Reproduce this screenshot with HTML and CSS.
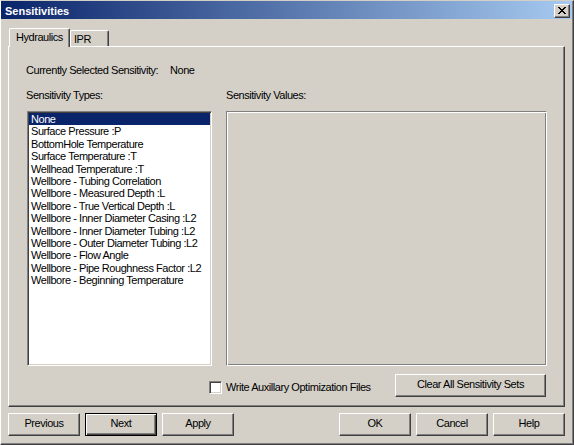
FILE: index.html
```html
<!DOCTYPE html>
<html>
<head>
<meta charset="utf-8">
<title>Sensitivities</title>
<link rel="stylesheet" href="styles.css">
</head>
<body>
<div class="window">
  <div class="titlebar">
    <span class="title">Sensitivities</span>
    <div class="close-btn">
      <svg width="8" height="7" viewBox="0 0 8 7" shape-rendering="crispEdges"><path d="M0 0h2v1H0z M6 0h2v1H6z M1 1h2v1H1z M5 1h2v1H5z M2 2h4v1H2z M3 3h2v1H3z M2 4h4v1H2z M1 5h2v1H1z M5 5h2v1H5z M0 6h2v1H0z M6 6h2v1H6z" fill="#000"/></svg>
    </div>
  </div>
  <div class="client">
    <div class="tabs">
      <div class="tab tab-active">Hydraulics</div>
      <div class="tab tab-ipr">IPR</div>
    </div>
    <div class="panel">
      <div class="current"><span class="current-label">Currently Selected Sensitivity:</span><span class="current-value">None</span></div>
      <div class="columns">
        <div class="col col-types">
          <div class="label">Sensitivity Types:</div>
          <ul class="listbox">
            <li class="selected">None</li>
            <li>Surface Pressure :P</li>
            <li>BottomHole Temperature</li>
            <li>Surface Temperature :T</li>
            <li>Wellhead Temperature :T</li>
            <li>Wellbore - Tubing Correlation</li>
            <li>Wellbore - Measured Depth :L</li>
            <li>Wellbore - True Vertical Depth :L</li>
            <li>Wellbore - Inner Diameter Casing :L2</li>
            <li>Wellbore - Inner Diameter Tubing :L2</li>
            <li>Wellbore - Outer Diameter Tubing :L2</li>
            <li>Wellbore - Flow Angle</li>
            <li>Wellbore - Pipe Roughness Factor :L2</li>
            <li>Wellbore - Beginning Temperature</li>
          </ul>
        </div>
        <div class="col col-values">
          <div class="label">Sensitivity Values:</div>
          <div class="values-box"></div>
        </div>
      </div>
      <div class="panel-footer">
        <label class="check"><span class="checkbox"></span><span>Write Auxillary Optimization Files</span></label>
        <div class="btn btn-clear">Clear All Sensitivity Sets</div>
      </div>
    </div>
    <div class="buttons">
      <div class="btn-group">
        <div class="btn">Previous</div>
        <div class="btn btn-default">Next</div>
        <div class="btn">Apply</div>
      </div>
      <div class="btn-group">
        <div class="btn">OK</div>
        <div class="btn">Cancel</div>
        <div class="btn">Help</div>
      </div>
    </div>
  </div>
</div>
</body>
</html>
```

FILE: styles.css
```css
* { box-sizing: border-box; }
html, body { margin: 0; padding: 0; }
body {
  width: 574px;
  height: 445px;
  overflow: hidden;
  background: #d4d0c8;
  font-family: "Liberation Sans", Arial, sans-serif;
  font-size: 11px;
  letter-spacing: -0.45px;
  color: #000;
}
.window {
  width: 574px;
  height: 445px;
  display: flex;
  flex-direction: column;
  border: 1px solid;
  border-color: #d4d0c8 #404040 #404040 #fff;
  padding: 0 1px 1px 0;
  box-shadow: inset -1px -1px 0 #808080;
}
.titlebar {
  height: 18px;
  display: flex;
  align-items: flex-start;
  background: linear-gradient(to right, #0a246a, #a6caf0);
}
.title {
  padding: 2px 0 0 4px;
  line-height: 17px;
  font-weight: bold;
  color: #fff;
  letter-spacing: 0;
}
.close-btn {
  width: 16px;
  height: 14px;
  margin: 3px 2px 0 auto;
  display: flex;
  align-items: center;
  justify-content: center;
  padding: 0 1px 1px 0;
  background: #d4d0c8;
  border: 1px solid;
  border-color: #fff #404040 #404040 #fff;
  box-shadow: inset -1px -1px 0 #808080;
}
.close-btn svg { display: block; }
.client {
  padding: 9px 7px 0 7px;
}
.tabs {
  display: flex;
  align-items: flex-end;
  margin-left: 1px;
}
.tab {
  background: #d4d0c8;
  border-top: 1px solid #fff;
  border-left: 1px solid #fff;
  border-right: 1px solid #404040;
  box-shadow: inset -1px 0 0 #808080;
  border-radius: 2px 2px 0 0;
  line-height: 13px;
  white-space: nowrap;
}
.tab-active {
  position: relative;
  z-index: 1;
  width: 61px;
  height: 19px;
  margin-bottom: -1px;
  padding: 2px 0 0 6px;
}
.tab-ipr {
  width: 39px;
  height: 16px;
  padding: 2px 0 0 3px;
}
.panel {
  height: 361px;
  border: 1px solid;
  border-color: #fff #404040 #404040 #fff;
  box-shadow: inset -1px -1px 0 #808080;
  padding: 17px 17px 9px 17px;
}
.current {
  display: flex;
  line-height: 13px;
  height: 13px;
  margin-bottom: 12px;
}
.current-label { width: 144px; white-space: nowrap; }
.columns {
  display: flex;
  gap: 14px;
}
.col-types { width: 186px; }
.col-values { width: 321px; }
.label {
  line-height: 13px;
  height: 13px;
  margin-bottom: 9px;
  white-space: nowrap;
}
.listbox {
  list-style: none;
  margin: 0 0 0 1px;
  width: 185px;
  height: 255px;
  padding: 1px;
  background: #fff;
  border: 1px solid;
  border-color: #808080 #fff #fff #808080;
  box-shadow: inset 1px 1px 0 #404040, inset -1px -1px 0 #d4d0c8;
}
.listbox li {
  height: 12.4px;
  line-height: 12.4px;
  padding-left: 2px;
  white-space: nowrap;
}
.listbox li.selected {
  background: #0a246a;
  color: #fff;
}
.values-box {
  width: 321px;
  height: 255px;
  border: 1px solid;
  border-color: #808080 #fff #fff #808080;
  box-shadow: inset 1px 1px 0 #fff, inset -1px -1px 0 #808080;
}
.panel-footer {
  display: flex;
  align-items: center;
  height: 23px;
  margin-top: 8px;
}
.check {
  display: flex;
  align-items: center;
  margin: 4px 0 0 183px;
  line-height: 13px;
  white-space: nowrap;
}
.checkbox {
  width: 13px;
  height: 13px;
  margin-right: 4px;
  background: #fff;
  border: 1px solid;
  border-color: #808080 #fff #fff #808080;
  box-shadow: inset 1px 1px 0 #404040, inset -1px -1px 0 #d4d0c8;
}
.btn {
  width: 72px;
  height: 23px;
  display: flex;
  align-items: center;
  justify-content: center;
  padding-bottom: 2px;
  background: #d4d0c8;
  border: 1px solid;
  border-color: #fff #404040 #404040 #fff;
  box-shadow: inset -1px -1px 0 #808080;
  line-height: 13px;
  white-space: nowrap;
}
.btn-default {
  border-color: #000;
  box-shadow: inset 1px 1px 0 #fff, inset -1px -1px 0 #404040, inset -2px -2px 0 #808080;
}
.btn-clear {
  width: 151px;
  margin: 0 1px 0 auto;
}
.buttons {
  display: flex;
  justify-content: space-between;
  margin-top: 6px;
}
.btn-group {
  display: flex;
  gap: 5px;
}
```
